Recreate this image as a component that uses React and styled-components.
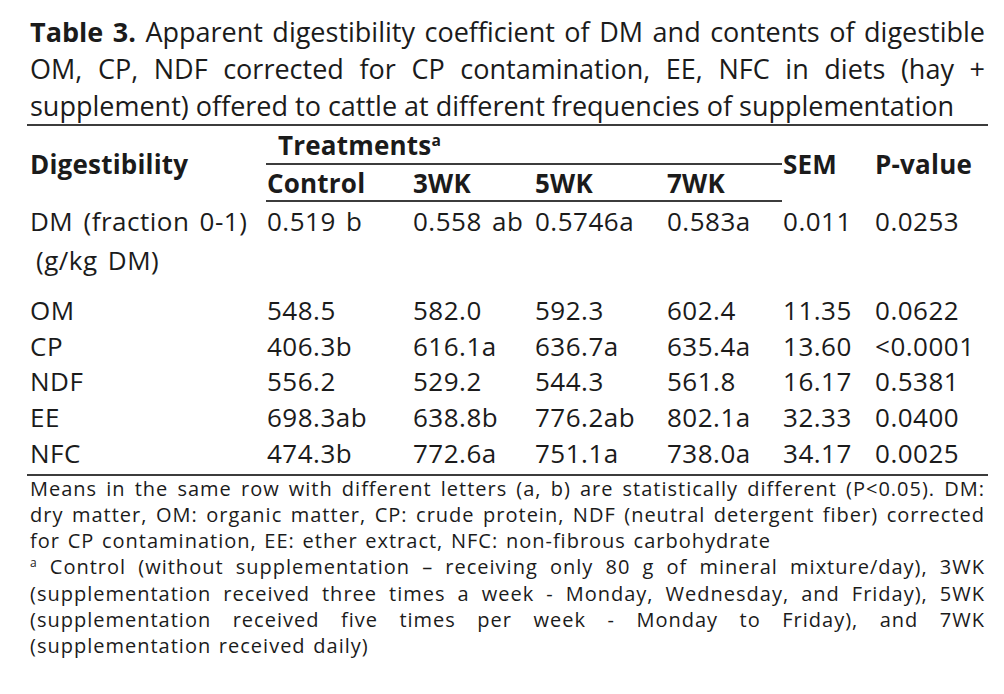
import React from 'react';
import styled, { createGlobalStyle } from 'styled-components';

const GlobalStyle = createGlobalStyle`
  html, body {
    margin: 0;
    padding: 0;
    background: #ffffff;
  }
  body {
    font-family: "Open Sans", "Noto Sans", sans-serif;
    color: #1b1b1b;
  }
`;

const Page = styled.div`
  width: 1004px;
  height: 694px;
  box-sizing: border-box;
  padding: 13px 16px 0 27px;
  overflow: hidden;
`;

const Caption = styled.div`
  padding: 0 3px;
  font-size: 27px;
  line-height: 37px;
`;

// one printed line of justified text; the last line of a paragraph stays ragged
const Line = styled.span`
  display: block;
  white-space: nowrap;
  text-align: left;
  text-align-last: ${p => (p.$last ? 'left' : 'justify')};
`;

const Bold = styled.b`
  font-weight: 700;
`;

const Table = styled.table`
  width: 961px;
  border-collapse: collapse;
  table-layout: fixed;
  font-size: 26px;
  letter-spacing: 0.5px;
  word-spacing: 3px;
  border-top: 2px solid #3c3c3c;
  border-bottom: 2px solid #3c3c3c;
`;

const Col = styled.col`
  width: ${p => p.$w}px;
`;

const Th = styled.th`
  font-weight: 700;
  text-align: left;
  padding: 0 0 0 ${p => p.$pad || 0}px;
  height: ${p => p.$h || 35}px;
  line-height: 34px;
  white-space: nowrap;
  vertical-align: middle;
  letter-spacing: 0.2px;
  border-bottom: ${p => (p.$line ? '2px solid #3c3c3c' : 'none')};
`;

const HeadRow = styled.tr`
  &:last-child th {
    border-bottom: 2px solid #3c3c3c;
  }
`;

const Td = styled.td`
  padding: ${p => p.$top || 0}px 0 ${p => p.$bottom || 0}px ${p => p.$pad || 0}px;
  height: ${p => p.$h || 35.5}px;
  line-height: 35px;
  white-space: nowrap;
  vertical-align: ${p => p.$valign || 'middle'};
`;

const Sup = styled.sup`
  font-size: 0.6em;
  vertical-align: 0.55em;
  line-height: 0;
`;

const Notes = styled.div`
  padding: 0 3px;
  font-size: 20px;
  line-height: 26.3px;
  letter-spacing: 1px;
  word-spacing: 1.5px;
`;

const cols = [239, 146, 122, 132, 116, 92, 114];

const rows = [
  ['OM', '548.5', '582.0', '592.3', '602.4', '11.35', '0.0622'],
  ['CP', '406.3b', '616.1a', '636.7a', '635.4a', '13.60', '<0.0001'],
  ['NDF', '556.2', '529.2', '544.3', '561.8', '16.17', '0.5381'],
  ['EE', '698.3ab', '638.8b', '776.2ab', '802.1a', '32.33', '0.0400'],
  ['NFC', '474.3b', '772.6a', '751.1a', '738.0a', '34.17', '0.0025'],
];

const DataRow = ({ cells, h, bottom }) => (
  <tr>
    {cells.map((c, i) => (
      <Td key={i} $pad={i === 0 ? 3 : 1} $h={h} $bottom={bottom}>{c}</Td>
    ))}
  </tr>
);

export default function App() {
  return (
    <Page>
      <GlobalStyle />
      <Caption>
        <Line><Bold>Table 3.</Bold> Apparent digestibility coefficient of DM and contents of digestible</Line>
        <Line>OM, CP, NDF corrected for CP contamination, EE, NFC in diets (hay +</Line>
        <Line $last>supplement) offered to cattle at different frequencies of supplementation</Line>
      </Caption>
      <Table>
        <colgroup>
          {cols.map((w, i) => <Col key={i} $w={w} />)}
        </colgroup>
        <thead>
          <HeadRow>
            <Th rowSpan={2} $pad={3}>Digestibility</Th>
            <Th colSpan={4} $pad={12} $h={37} $line>Treatments<Sup>a</Sup></Th>
            <Th rowSpan={2} $pad={1}>SEM</Th>
            <Th rowSpan={2} $pad={1}>P-value</Th>
          </HeadRow>
          <HeadRow>
            <Th $pad={1}>Control</Th>
            <Th $pad={1}>3WK</Th>
            <Th $pad={1}>5WK</Th>
            <Th $pad={1}>7WK</Th>
          </HeadRow>
        </thead>
        <tbody>
          <DataRow h={39} cells={['DM (fraction 0-1)', '0.519 b', '0.558 ab', '0.5746a', '0.583a', '0.011', '0.0253']} />
          <tr>
            <Td $pad={9} $h={50} $top={2} $valign="top" colSpan={7}>(g/kg DM)</Td>
          </tr>
          {rows.map((r, i) => (
            <DataRow key={r[0]} cells={r} h={i === rows.length - 1 ? 36.5 : 35.5} bottom={i === rows.length - 1 ? 2 : 0} />
          ))}
        </tbody>
      </Table>
      <Notes>
        <Line>Means in the same row with different letters (a, b) are statistically different (P&lt;0.05). DM:</Line>
        <Line>dry matter, OM: organic matter, CP: crude protein, NDF (neutral detergent fiber) corrected</Line>
        <Line $last>for CP contamination, EE: ether extract, NFC: non-fibrous carbohydrate</Line>
        <Line><Sup>a</Sup> Control (without supplementation – receiving only 80 g of mineral mixture/day), 3WK</Line>
        <Line>(supplementation received three times a week - Monday, Wednesday, and Friday), 5WK</Line>
        <Line>(supplementation received five times per week - Monday to Friday), and 7WK</Line>
        <Line $last>(supplementation received daily)</Line>
      </Notes>
    </Page>
  );
}
